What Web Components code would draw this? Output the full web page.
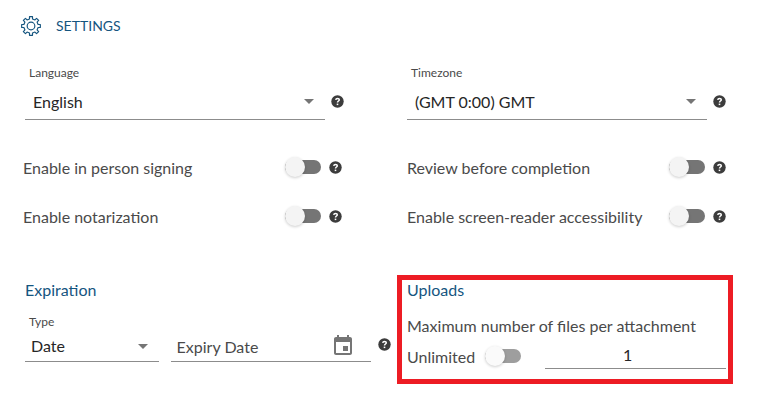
<!DOCTYPE html>
<html lang="en">
<head>
<meta charset="utf-8">
<title>Settings</title>
<style>
  body {
    margin: 0;
    background: #fff;
    color: #4a4a4a;
    font-family: Lato, sans-serif;
    font-size: 16px;
    line-height: 20px;
  }
</style>
</head>
<body>
<settings-page heading="Settings">
  <settings-row class="fields" slot="fields">
    <select-field label="Language" options="English,French,Spanish"><help-tip></help-tip></select-field>
    <select-field label="Timezone" options="(GMT 0:00) GMT,(GMT 1:00) CET"><help-tip></help-tip></select-field>
  </settings-row>
  <settings-row slot="toggles">
    <toggle-field label="Enable in person signing"><help-tip></help-tip></toggle-field>
    <toggle-field label="Review before completion"><help-tip></help-tip></toggle-field>
    <toggle-field label="Enable notarization"><help-tip></help-tip></toggle-field>
    <toggle-field label="Enable screen-reader accessibility"><help-tip></help-tip></toggle-field>
  </settings-row>
  <expiration-settings slot="groups"></expiration-settings>
  <upload-settings slot="groups"></upload-settings>
</settings-page>

<script>
(function main() {
  class SettingsPage extends HTMLElement {
    constructor() {
      super();
      this.attachShadow({ mode: "open" });
    }

    connectedCallback() {
      const heading = this.getAttribute("heading");
      this.shadowRoot.innerHTML = `
        <style>
          :host {
            display: flex;
            flex-direction: column;
          }
          header {
            display: flex;
            align-items: center;
            gap: 15px;
            padding: 16px 21px 0;
            color: #15557f;
          }
          h1 {
            margin: 0;
            font-size: 14px;
            font-weight: 400;
            text-transform: uppercase;
          }
          svg {
            width: 20px;
            height: 20px;
            fill: none;
            stroke: currentColor;
            stroke-width: 1.4;
            stroke-linejoin: round;
          }
          .fields {
            padding: 28px 31px 0 25px;
          }
          .toggles {
            padding: 37px 31px 0 23px;
          }
          .groups {
            display: grid;
            grid-template-columns: 366fr 336fr;
            gap: 6px;
            align-items: start;
            padding: 49px 24px 16px 25px;
          }
        </style>
        <header>
          <svg viewBox="0 0 24 24" aria-hidden="true">
            <path d="M10.2 .8H13.8V3.5L16.74 4.72 18.65 2.81 21.19 5.35 19.28 7.26 20.5 10.2H23.2V13.8H20.5L19.28 16.74 21.19 18.65 18.65 21.19 16.74 19.28 13.8 20.5V23.2H10.2V20.5L7.26 19.28 5.35 21.19 2.81 18.65 4.72 16.74 3.5 13.8H.8V10.2H3.5L4.72 7.26 2.81 5.35 5.35 2.81 7.26 4.72 10.2 3.5Z"/>
            <circle cx="12" cy="12" r="4.6"/>
          </svg>
          <h1>${heading}</h1>
        </header>
        <div class="fields"><slot name="fields"></slot></div>
        <div class="toggles"><slot name="toggles"></slot></div>
        <div class="groups"><slot name="groups"></slot></div>
      `;
    }
  }

  // Two equal columns of settings
  class SettingsRow extends HTMLElement {
    constructor() {
      super();
      this.attachShadow({ mode: "open" });
    }

    connectedCallback() {
      this.shadowRoot.innerHTML = `
        <style>
          :host {
            display: grid;
            grid-template-columns: 1fr 1fr;
            gap: 29px 65px;
          }
          :host(.fields) {
            column-gap: 63px;
          }
        </style>
        <slot></slot>
      `;
    }
  }

  class HelpTip extends HTMLElement {
    constructor() {
      super();
      this.attachShadow({ mode: "open" });
    }

    connectedCallback() {
      this.shadowRoot.innerHTML = `
        <style>
          :host {
            display: block;
            flex: none;
          }
          button {
            display: block;
            padding: 0;
            border: 0;
            background: none;
            cursor: pointer;
          }
          svg {
            display: block;
            width: 13px;
            height: 13px;
          }
        </style>
        <button type="button" aria-label="Help">
          <svg viewBox="0 0 13 13" aria-hidden="true">
            <circle cx="6.5" cy="6.5" r="6.2" fill="#3c3c3c"/>
            <path d="M4.7 4.9C4.9 3.8 5.6 3.4 6.5 3.4C7.6 3.4 8.3 4 8.3 4.8C8.3 6 6.5 6 6.5 7.5" fill="none" stroke="#fff" stroke-width="1.5"/>
            <rect x="5.7" y="8.6" width="1.6" height="1.5" fill="#fff"/>
          </svg>
        </button>
      `;
    }
  }

  class SelectField extends HTMLElement {
    constructor() {
      super();
      this.attachShadow({ mode: "open" });
    }

    connectedCallback() {
      const label = this.getAttribute("label");
      const options = this.getAttribute("options").split(",");
      this.shadowRoot.innerHTML = `
        <style>
          :host {
            display: flex;
            flex-direction: column;
            gap: 4px;
          }
          label {
            padding-left: 4px;
            font-size: 12px;
            line-height: 18px;
          }
          .line {
            display: flex;
            align-items: center;
            gap: 6px;
          }
          .box {
            flex: 1;
            display: grid;
            align-items: center;
            padding-bottom: 2px;
            border-bottom: 1px solid #8c8c8c;
          }
          select, svg {
            grid-area: 1 / 1;
          }
          select {
            appearance: none;
            width: 100%;
            height: 31px;
            padding: 0 28px 0 8px;
            border: 0;
            background: none;
            color: #262626;
            font: inherit;
          }
          svg {
            justify-self: end;
            width: 10px;
            height: 5px;
            margin-right: 11px;
            fill: #757575;
            pointer-events: none;
          }
          ::slotted(help-tip) {
            margin-bottom: 3px;
          }
          :host(.compact) {
            gap: 0;
          }
          :host(.compact) .box {
            padding-bottom: 0;
          }
          :host(.compact) select {
            height: 30px;
            padding: 0 28px 0 6px;
          }
        </style>
        <label for="select">${label}</label>
        <div class="line">
          <div class="box">
            <select id="select">${options.map((o) => `<option>${o}</option>`).join("")}</select>
            <svg viewBox="0 0 10 5" aria-hidden="true"><path d="M0 0h10L5 5z"/></svg>
          </div>
          <slot></slot>
        </div>
      `;
    }
  }

  class ToggleField extends HTMLElement {
    constructor() {
      super();
      this.attachShadow({ mode: "open" });
    }

    connectedCallback() {
      const label = this.getAttribute("label");
      this.shadowRoot.innerHTML = `
        <style>
          :host {
            display: flex;
            align-items: center;
            --track: #757575;
            --thumb: #f4f4f4;
          }
          :host(.light) {
            --track: #9e9e9e;
            --thumb: #fafafa;
          }
          label {
            flex: 1;
            padding-top: 2px;
            line-height: 18px;
            white-space: nowrap;
          }
          input {
            appearance: none;
            flex: none;
            display: grid;
            align-items: center;
            width: 36px;
            height: 20px;
            margin: 0 8px;
            cursor: pointer;
          }
          :host(.light) input {
            margin: 0 0 0 10px;
          }
          input::before, input::after {
            content: "";
            grid-area: 1 / 1;
          }
          input::before {
            height: 14px;
            border-radius: 7px;
            background: var(--track);
          }
          input::after {
            width: 20px;
            height: 20px;
            border-radius: 50%;
            background: var(--thumb);
            box-shadow: 0 1px 3px rgba(0, 0, 0, 0.2);
          }
          input:checked::after {
            justify-self: end;
          }
        </style>
        <label for="toggle">${label}</label>
        <input id="toggle" type="checkbox" role="switch">
        <slot></slot>
      `;
    }
  }

  class DateField extends HTMLElement {
    constructor() {
      super();
      this.attachShadow({ mode: "open" });
    }

    connectedCallback() {
      const label = this.getAttribute("label");
      this.shadowRoot.innerHTML = `
        <style>
          :host {
            display: flex;
            align-items: center;
            min-width: 0;
            border-bottom: 1px solid #8c8c8c;
          }
          input {
            flex: 1;
            min-width: 0;
            height: 30px;
            box-sizing: border-box;
            padding: 0 6px;
            border: 0;
            background: none;
            color: #262626;
            font: inherit;
          }
          input::placeholder {
            color: #4a4a4a;
            opacity: 1;
          }
          button {
            display: block;
            margin-right: 16px;
            padding: 0;
            border: 0;
            background: none;
          }
          svg {
            display: block;
            width: 24px;
            height: 24px;
            fill: #757575;
          }
        </style>
        <input type="text" placeholder="${label}" aria-label="${label}">
        <button type="button" aria-label="Open calendar">
          <svg viewBox="0 0 24 24" aria-hidden="true">
            <path d="M17 12h-5v5h5v-5zM16 1v2H8V1H6v2H5c-1.11 0-2 .9-2 2v14c0 1.1.89 2 2 2h14c1.1 0 2-.9 2-2V5c0-1.1-.9-2-2-2h-1V1h-2zm3 18H5V8h14v11z"/>
          </svg>
        </button>
      `;
    }
  }

  class ExpirationSettings extends HTMLElement {
    constructor() {
      super();
      this.attachShadow({ mode: "open" });
    }

    connectedCallback() {
      this.shadowRoot.innerHTML = `
        <style>
          :host {
            display: block;
            min-width: 0;
            padding-top: 5px;
          }
          h2 {
            margin: 0 0 13px;
            color: #15557f;
            font-size: 16px;
            font-weight: 400;
          }
          .row {
            display: flex;
            align-items: flex-end;
          }
          select-field {
            flex: 2;
            margin-right: 12px;
          }
          date-field {
            flex: 3;
            margin-right: 7px;
          }
          help-tip {
            margin-bottom: 11px;
          }
        </style>
        <h2>Expiration</h2>
        <div class="row">
          <select-field class="compact" label="Type" options="Date,Days"></select-field>
          <date-field label="Expiry Date"></date-field>
          <help-tip></help-tip>
        </div>
      `;
    }
  }

  class UploadSettings extends HTMLElement {
    constructor() {
      super();
      this.attachShadow({ mode: "open" });
    }

    connectedCallback() {
      this.shadowRoot.innerHTML = `
        <style>
          :host {
            display: block;
            box-sizing: border-box;
            min-width: 0;
            padding: 0 2px 10px 5px;
            border: 5px solid #ed1c24;
          }
          h2 {
            margin: 0 0 16px;
            color: #15557f;
            font-size: 16px;
            font-weight: 400;
          }
          .row {
            display: flex;
            align-items: flex-end;
            gap: 24px;
          }
          input {
            flex: 1;
            min-width: 0;
            height: 33px;
            box-sizing: border-box;
            padding: 4px 16px 0 0;
            border: 0;
            border-bottom: 1px solid #8c8c8c;
            background: none;
            color: #262626;
            font: inherit;
            text-align: center;
          }
          toggle-field {
            margin-bottom: 3px;
          }
        </style>
        <h2>Uploads</h2>
        <label for="max">Maximum number of files per attachment</label>
        <div class="row">
          <toggle-field class="light" label="Unlimited"></toggle-field>
          <input id="max" type="text" inputmode="numeric" value="1">
        </div>
      `;
    }
  }

  customElements.define("settings-page", SettingsPage);
  customElements.define("settings-row", SettingsRow);
  customElements.define("help-tip", HelpTip);
  customElements.define("select-field", SelectField);
  customElements.define("toggle-field", ToggleField);
  customElements.define("date-field", DateField);
  customElements.define("expiration-settings", ExpirationSettings);
  customElements.define("upload-settings", UploadSettings);
})();
</script>
</body>
</html>
